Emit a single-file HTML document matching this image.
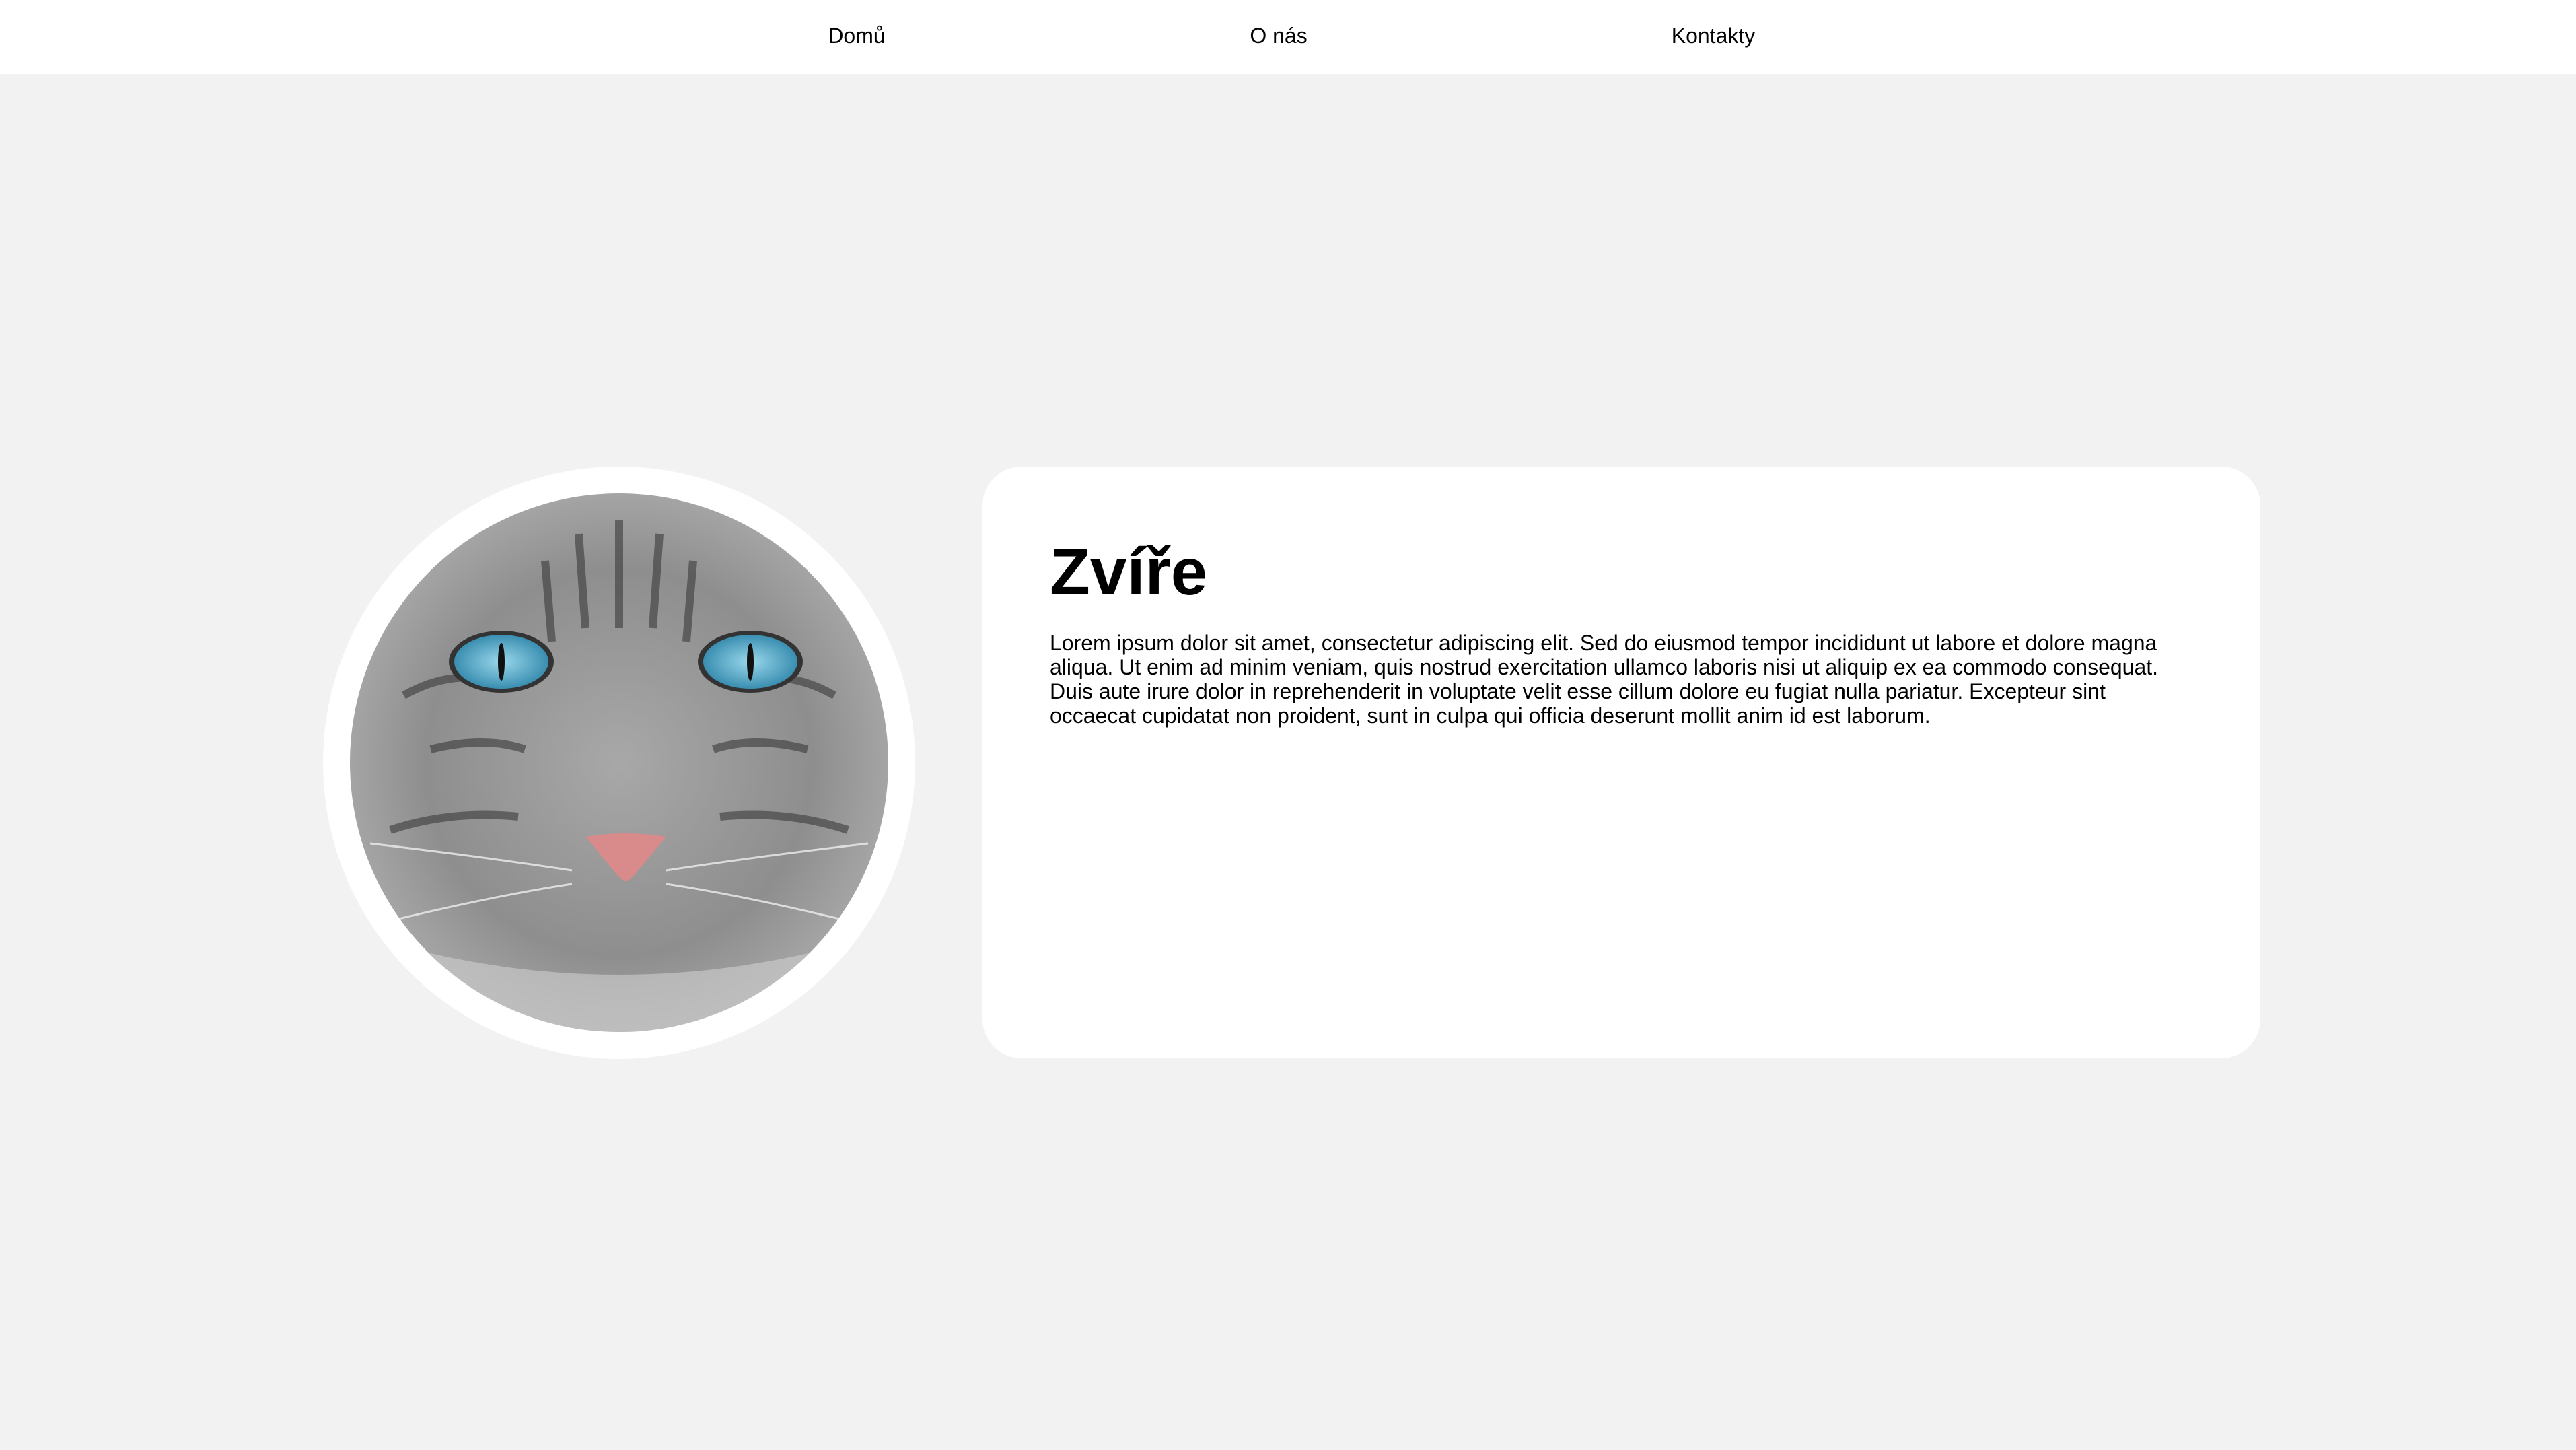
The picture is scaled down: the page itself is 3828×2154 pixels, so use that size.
<!DOCTYPE html>
<html><head><meta charset="utf-8"><style>
*{margin:0;padding:0;box-sizing:border-box}
html,body{width:3828px;height:2154px;overflow:hidden;background:#f2f2f2;font-family:"Liberation Sans",Arial,sans-serif;color:#000}
nav{position:absolute;left:0;top:0;width:3828px;height:110px;background:#fff}
nav span{position:absolute;top:35px;font-size:32px;transform:translateX(-50%)}
.circle{position:absolute;left:480px;top:693px;width:880px;height:880px;border-radius:50%;background:#fff}
.circle svg{position:absolute;left:40px;top:40px;width:800px;height:800px;border-radius:50%}
.card{position:absolute;left:1460px;top:693px;width:1899px;height:879px;background:#fff;border-radius:58px;padding:0 100px}
h1{font-size:98px;font-weight:bold;margin-top:101px;line-height:110px}
p{font-size:32px;line-height:36px;margin-top:33px;width:1680px}
</style></head><body>
<nav><span style="left:1273px">Domů</span><span style="left:1900px">O nás</span><span style="left:2546px">Kontakty</span></nav>
<div class="circle"><svg viewBox="0 0 800 800">
<defs><radialGradient id="g" cx="50%" cy="50%" r="60%"><stop offset="0" stop-color="#a8a8a8"/><stop offset="0.6" stop-color="#8e8e8e"/><stop offset="1" stop-color="#b4b4b4"/></radialGradient>
<radialGradient id="e" cx="50%" cy="50%" r="50%"><stop offset="0" stop-color="#9ad8ec"/><stop offset="1" stop-color="#3a8eb0"/></radialGradient></defs>
<rect width="800" height="800" fill="url(#g)"/>
<g stroke="#3a3a3a" stroke-width="12" fill="none" opacity="0.6">
<path d="M290 100 L300 220"/><path d="M340 60 L350 200"/><path d="M400 40 L400 200"/><path d="M460 60 L450 200"/><path d="M510 100 L500 220"/>
<path d="M80 300 Q150 260 220 280"/><path d="M580 280 Q650 260 720 300"/>
<path d="M60 500 Q150 470 250 480"/><path d="M550 480 Q650 470 740 500"/>
<path d="M120 380 Q200 360 260 380"/><path d="M540 380 Q600 360 680 380"/></g>
<g stroke="#eee" stroke-width="3" fill="none" opacity="0.8">
<path d="M330 560 Q200 540 30 520"/><path d="M330 580 Q200 600 40 640"/><path d="M470 560 Q600 540 770 520"/><path d="M470 580 Q600 600 760 640"/></g>
<ellipse cx="225" cy="250" rx="78" ry="46" fill="#333"/><ellipse cx="225" cy="250" rx="70" ry="40" fill="url(#e)"/><ellipse cx="225" cy="250" rx="5" ry="28" fill="#111"/>
<ellipse cx="595" cy="250" rx="78" ry="46" fill="#333"/><ellipse cx="595" cy="250" rx="70" ry="40" fill="url(#e)"/><ellipse cx="595" cy="250" rx="5" ry="28" fill="#111"/>
<path d="M350 510 Q410 500 470 510 L420 570 Q410 580 400 570 Z" fill="#d98a8a"/>
<path d="M0 650 Q400 780 800 650 L800 800 L0 800Z" fill="#cfcfcf" opacity="0.6"/>
</svg></div>
<div class="card"><h1>Zvíře</h1>
<p>Lorem ipsum dolor sit amet, consectetur adipiscing elit. Sed do eiusmod tempor incididunt ut labore et dolore magna aliqua. Ut enim ad minim veniam, quis nostrud exercitation ullamco laboris nisi ut aliquip ex ea commodo consequat. Duis aute irure dolor in reprehenderit in voluptate velit esse cillum dolore eu fugiat nulla pariatur. Excepteur sint occaecat cupidatat non proident, sunt in culpa qui officia deserunt mollit anim id est laborum.</p></div>
</body></html>
